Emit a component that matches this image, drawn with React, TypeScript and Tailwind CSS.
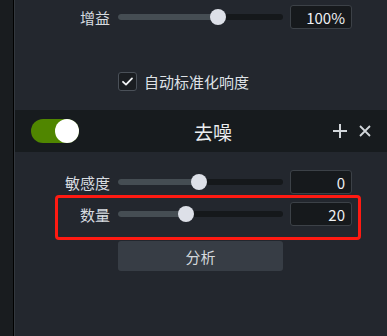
import React from "react";

const font = {
  fontFamily: '"Noto Sans CJK SC", "Noto Sans", sans-serif',
};

type SliderRowProps = {
  label: string;
  value: string;
  fraction: number;
};

const SliderRow: React.FC<SliderRowProps> = ({ label, value, fraction }) => {
  const pct = `${fraction * 100}%`;
  return (
    <div className="flex items-center h-[24px]">
      <div className="w-[95px] text-right text-[15px] leading-none text-[#d8dce0]">{label}</div>
      <div className="relative ml-[8px] w-[165px] h-[6px] rounded-full bg-[#15181b]">
        <div className="absolute left-0 top-0 h-full rounded-full bg-[#454d53]" style={{ width: pct }} />
        <div
          className="absolute top-1/2 w-[16px] h-[16px] -translate-x-1/2 -translate-y-1/2 rounded-full bg-[#dde0e8]"
          style={{ left: pct }}
        />
      </div>
      <div className="ml-[7px] w-[62px] h-[24px] flex items-center justify-end pr-[6px] rounded-[3px] border border-[#3c4147] bg-[#16191c] text-[15px] leading-none text-[#eef0f2]">
        {value}
      </div>
    </div>
  );
};

export default function App() {
  return (
    <div className="flex w-[387px] h-[336px] bg-[#23272e] overflow-hidden" style={font}>
      <div className="w-[13px] shrink-0 bg-[#191c1f]" />
      <div className="w-px shrink-0 bg-black" />
      <div className="w-px shrink-0 bg-[#33383e]" />
      <div className="flex-1 flex flex-col">
        <div className="mt-[5px]">
          <SliderRow label="增益" value="100%" fraction={0.606} />
        </div>

        <div className="mt-[43px] flex items-center pl-[103px] h-[19px]">
          <div className="w-[19px] h-[19px] rounded-[3px] border border-[#4a5058] bg-[#1a1d21] flex items-center justify-center">
            <svg width="13" height="13" viewBox="0 0 13 13" fill="none">
              <path d="M2 6.8 L5 9.6 L11 3.4" stroke="#f2f4f6" strokeWidth="1.8" strokeLinecap="round" strokeLinejoin="round" />
            </svg>
          </div>
          <span className="ml-[7px] text-[15px] leading-none text-[#dfe2e6]">自动标准化响度</span>
        </div>

        <div className="mt-[19px] h-[42px] bg-[#171b1e] flex items-center pl-[16px] pr-[16px]">
          <div className="relative w-[48px] h-[24px] rounded-full bg-[#508600]">
            <div className="absolute right-0 top-1/2 -translate-y-1/2 w-[24px] h-[24px] rounded-full bg-white" />
          </div>
          <span className="ml-[115px] text-[19px] leading-none text-[#eceef0]">去噪</span>
          <div className="flex-1" />
          <svg width="16" height="16" viewBox="0 0 16 16" fill="none">
            <path d="M8 1 V15 M1 8 H15" stroke="#d2d6da" strokeWidth="2" />
          </svg>
          <svg className="ml-[11px]" width="12" height="12" viewBox="0 0 12 12" fill="none">
            <path d="M1 1 L11 11 M11 1 L1 11" stroke="#d2d6da" strokeWidth="1.8" />
          </svg>
        </div>

        <div className="mt-[18px]">
          <SliderRow label="敏感度" value="0" fraction={0.49} />
        </div>

        <div className="relative mt-[8px]">
          <SliderRow label="数量" value="20" fraction={0.41} />
          <div className="absolute left-[40px] top-[-7px] w-[306px] h-[45px] rounded-[4px] border-[3px] border-[#ff1a12]" />
        </div>

        <div className="mt-[15px] ml-[103px] w-[165px] h-[30px] rounded-[3px] bg-[#373d45] flex items-center justify-center text-[15px] leading-none text-[#d4d8dc]">
          分析
        </div>
      </div>
    </div>
  );
}
